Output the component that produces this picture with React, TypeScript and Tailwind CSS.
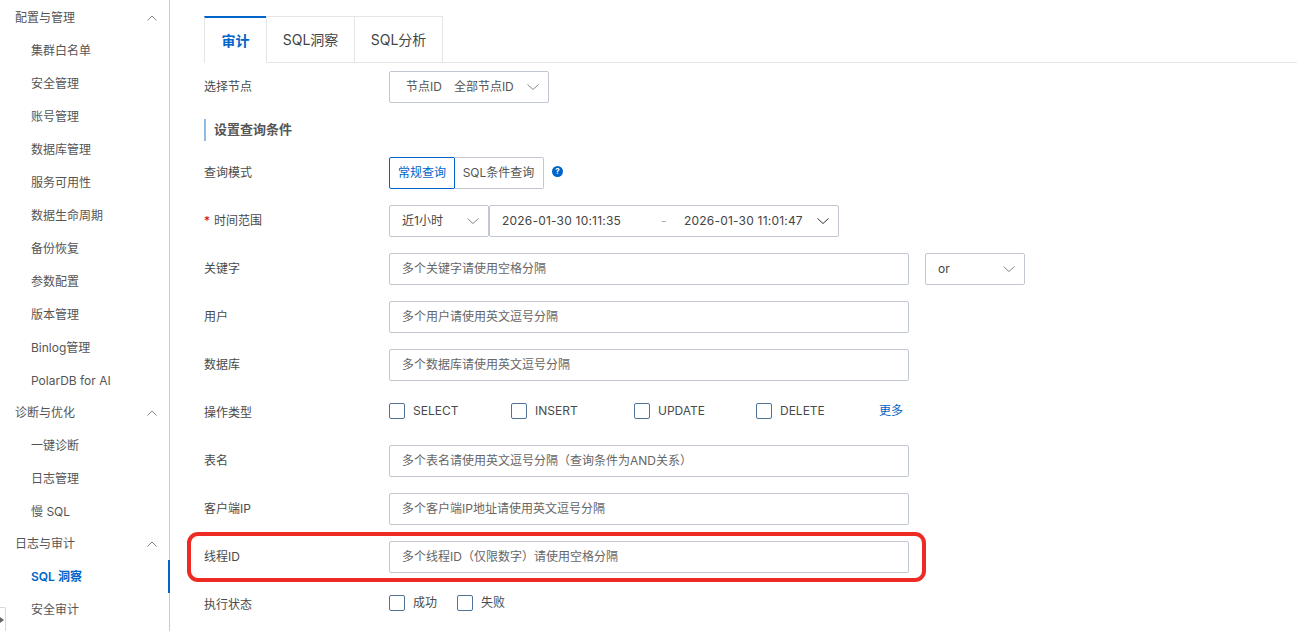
import React from "react";

const font = { fontFamily: '"Inter","Noto Sans CJK SC",sans-serif' };

type NavItem = { label: string; header?: boolean; active?: boolean };
const nav: NavItem[] = [
  { label: "配置与管理", header: true },
  { label: "集群白名单" },
  { label: "安全管理" },
  { label: "账号管理" },
  { label: "数据库管理" },
  { label: "服务可用性" },
  { label: "数据生命周期" },
  { label: "备份恢复" },
  { label: "参数配置" },
  { label: "版本管理" },
  { label: "Binlog管理" },
  { label: "PolarDB for AI" },
  { label: "诊断与优化", header: true },
  { label: "一键诊断" },
  { label: "日志管理" },
  { label: "慢 SQL" },
  { label: "日志与审计", header: true },
  { label: "SQL 洞察", active: true },
  { label: "安全审计" },
];

function Chevron({ up, className }: { up?: boolean; className?: string }) {
  return (
    <svg width="14" height="8" viewBox="0 0 14 8" fill="none" className={className}>
      <path d={up ? "M2.5 6.5 L7 2 L11.5 6.5" : "M1.5 1.5 L7 6.5 L12.5 1.5"} stroke="currentColor" strokeWidth="1" />
    </svg>
  );
}

function Row({ label, children, required }: { label: string; children: React.ReactNode; required?: boolean }) {
  return (
    <div className="flex h-8 items-center">
      <div className="w-[185px] shrink-0 text-[12px] text-[#4a4a4a]">
        {required && <span className="mr-[4px] text-[#d0021b]">*</span>}
        {label}
      </div>
      {children}
    </div>
  );
}

function TextField({ placeholder }: { placeholder: string }) {
  return (
    <div className="flex h-8 w-[520px] items-center rounded-[2px] border border-[#c1c7d0] bg-white pl-[12px] text-[12px] text-[#666]">
      {placeholder}
    </div>
  );
}

function Check({ label, width }: { label: string; width?: string }) {
  return (
    <div className={`flex items-center gap-[8px] ${width ?? ""}`}>
      <span className="h-[16px] w-[16px] rounded-[2px] border border-[#4f7396] bg-white" />
      <span className="text-[12px] text-[#4a4a4a]">{label}</span>
    </div>
  );
}

export default function App() {
  return (
    <div className="flex h-[631px] overflow-hidden bg-white" style={font}>
      <aside className="relative w-[170px] shrink-0 border-r border-[#c9cbcf] pt-[2px]">
        {nav.map((n) =>
          n.header ? (
            <div key={n.label} className="flex h-[32px] items-center justify-between pl-[15px] pr-[10px] text-[12px] text-[#555]">
              <span>{n.label}</span>
              <Chevron up className="text-[#888]" />
            </div>
          ) : (
            <div
              key={n.label}
              className={`relative flex h-[33px] items-center pl-[31px] text-[12px] ${n.active ? "font-semibold text-[#0064c8]" : "text-[#555]"}`}
            >
              {n.label}
              {n.active && <span className="absolute right-[-1px] top-0 h-full w-[2px] bg-[#0064c8]" />}
            </div>
          )
        )}
        <div className="absolute bottom-0 left-0 flex h-[24px] w-[6px] items-center rounded-tr-[2px] border-r border-t border-[#d5d7da] bg-white">
          <span className="h-0 w-0 border-y-[3px] border-l-[4px] border-y-transparent border-l-[#666]" />
        </div>
      </aside>

      <main className="relative min-w-0 flex-1 pl-[34px] pt-[16px]">
        <div className="flex h-[47px] border-b border-[#e3e5e8] text-[14px]">
          <div className="flex h-[47px] w-[62px] items-center justify-center border-l border-t-2 border-[#e3e5e8] border-t-[#0064c8] bg-white font-semibold text-[#0064c8]">
            审计
          </div>
          <div className="flex h-[46px] w-[88px] items-center justify-center border-l border-t border-[#e3e5e8] text-[#444]">
            SQL洞察
          </div>
          <div className="flex h-[46px] w-[89px] items-center justify-center border-x border-t border-[#e3e5e8] text-[#444]">
            SQL分析
          </div>
        </div>

        <div className="mt-[8px] flex flex-col gap-4">
          <Row label="选择节点">
            <div className="flex h-8 w-[160px] items-center justify-between rounded-[2px] border border-[#c1c7d0] pl-[16px] pr-[8px] text-[12px] text-[#555]">
              <span className="flex gap-[12px]">
                <span>节点ID</span>
                <span>全部节点ID</span>
              </span>
              <Chevron className="text-[#888]" />
            </div>
          </Row>

          <div className="flex h-[22px] items-center border-l-2 border-[#8fbce6] pl-[8px] text-[13px] font-semibold text-[#555]">
            设置查询条件
          </div>

          <Row label="查询模式">
            <div className="flex h-8 text-[12px]">
              <div className="flex w-[66px] items-center justify-center rounded-l-[2px] border border-[#0064c8] text-[#0064c8]">常规查询</div>
              <div className="-ml-px flex w-[90px] items-center justify-center rounded-r-[2px] border border-l-0 border-[#c1c7d0] text-[#555]">SQL条件查询</div>
            </div>
            <span className="ml-[8px] -mt-[4px] flex h-[11px] w-[11px] items-center justify-center rounded-full bg-[#0064c8] text-[8px] font-bold leading-none text-white">?</span>
          </Row>

          <Row label="时间范围" required>
            <div className="flex h-8 w-[100px] items-center justify-between rounded-[2px] border border-[#c1c7d0] pl-[12px] pr-[8px] text-[12px] text-[#444]">
              <span>近1小时</span>
              <Chevron className="text-[#888]" />
            </div>
            <div className="flex h-8 w-[350px] items-center rounded-[2px] border border-[#c1c7d0] pl-[12px] pr-[8px] text-[12px] text-[#444]">
              <span className="w-[159px] whitespace-nowrap tracking-[0.2px]">2026-01-30 10:11:35</span>
              <span className="w-[23px] text-[#aaa]">-</span>
              <span className="whitespace-nowrap tracking-[0.2px]">2026-01-30 11:01:47</span>
              <Chevron className="ml-auto text-[#333]" />
            </div>
          </Row>

          <Row label="关键字">
            <TextField placeholder="多个关键字请使用空格分隔" />
            <div className="ml-[16px] flex h-8 w-[100px] items-center justify-between rounded-[2px] border border-[#c1c7d0] pl-[12px] pr-[8px] text-[12px] text-[#444]">
              <span>or</span>
              <Chevron className="text-[#888]" />
            </div>
          </Row>

          <Row label="用户">
            <TextField placeholder="多个用户请使用英文逗号分隔" />
          </Row>

          <Row label="数据库">
            <TextField placeholder="多个数据库请使用英文逗号分隔" />
          </Row>

          <Row label="操作类型">
            <div className="flex -translate-y-[2px] items-center">
              <Check label="SELECT" width="w-[122px]" />
              <Check label="INSERT" width="w-[123px]" />
              <Check label="UPDATE" width="w-[122px]" />
              <Check label="DELETE" width="w-[123px]" />
              <span className="text-[12px] text-[#0064c8]">更多</span>
            </div>
          </Row>

          <Row label="表名">
            <TextField placeholder="多个表名请使用英文逗号分隔（查询条件为AND关系）" />
          </Row>

          <Row label="客户端IP">
            <TextField placeholder="多个客户端IP地址请使用英文逗号分隔" />
          </Row>

          <Row label="线程ID">
            <TextField placeholder="多个线程ID（仅限数字）请使用空格分隔" />
          </Row>

          <Row label="执行状态">
            <div className="flex -translate-y-[2px] items-center gap-[20px]">
              <Check label="成功" />
              <Check label="失败" />
            </div>
          </Row>
        </div>

        <div className="pointer-events-none absolute left-[17px] top-[532px] h-[50px] w-[739px] rounded-[11px] border-[4px] border-[#ee2a24]" />
      </main>
    </div>
  );
}
